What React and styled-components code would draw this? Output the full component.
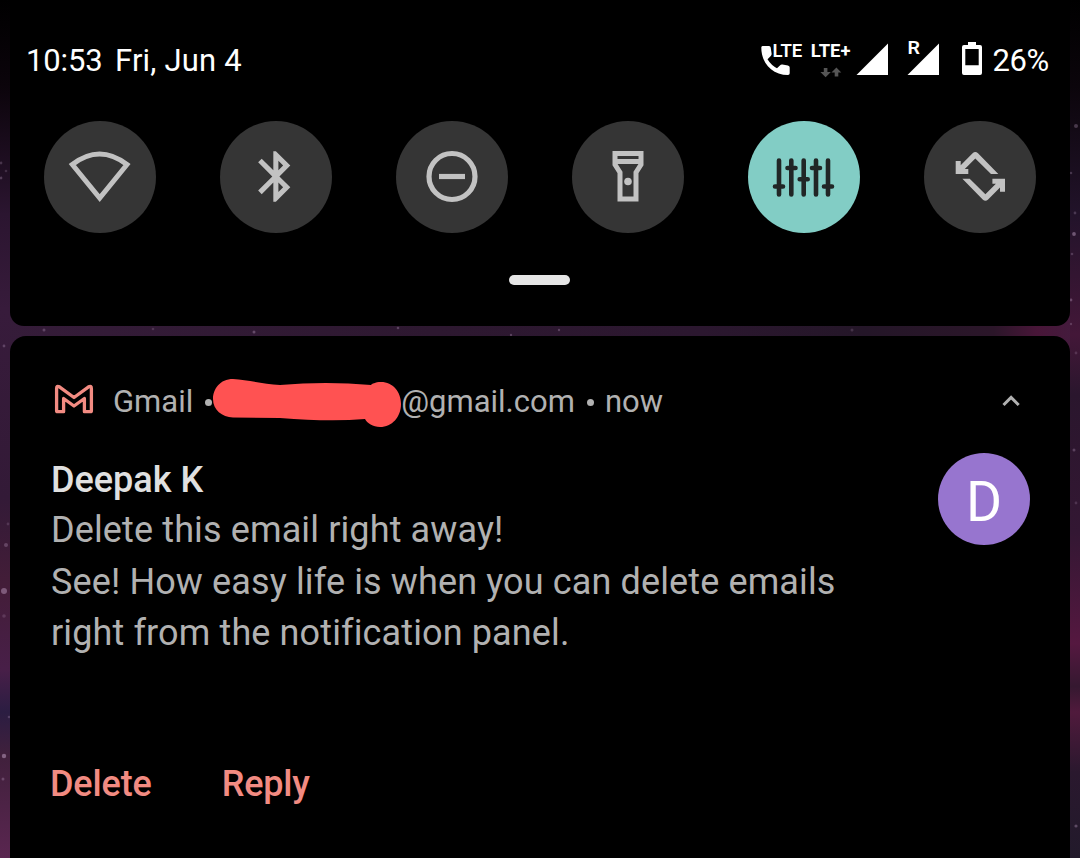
import React from 'react';
import styled, { createGlobalStyle } from 'styled-components';

const GlobalStyle = createGlobalStyle`
  * { box-sizing: border-box; }
  body { margin: 0; background: #000; font-family: Roboto, "Liberation Sans", sans-serif; }
`;

const Screen = styled.main`
  position: relative;
  width: 1080px;
  height: 858px;
  overflow: hidden;
  padding: 0 10px;
  display: flex;
  flex-direction: column;
  gap: 10px;
  background: linear-gradient(90deg, #351c39, #2d1830 40%, #2b172f 65%, #241628 80%, #2b1629 92%, #481638 96%, #431c3e);
`;

const Rail = styled.svg`
  position: absolute;
  left: 0;
  top: 0;
`;

const Shade = styled.section`
  position: relative;
  height: 326px;
  flex: none;
  display: flex;
  flex-direction: column;
  align-items: center;
  background: #000;
  border-radius: 0 0 14px 14px;
`;

const StatusBar = styled.header`
  width: 100%;
  height: 121px;
  padding: 41px 21px 0 16px;
  display: flex;
  justify-content: space-between;
  align-items: flex-start;
  color: #fff;
  font-size: 31px;
  line-height: 40px;
`;

const Clock = styled.div`
  display: flex;
  gap: 12.5px;
`;

const StatusText = styled.span`
  letter-spacing: ${(p) => p.$track}px;
`;

const Indicators = styled.div`
  display: flex;
  svg {
    margin-top: -8px;
    overflow: visible;
    font-family: Roboto, "Liberation Sans", sans-serif;
  }
`;

const Tiles = styled.div`
  width: 100%;
  padding: 0 34px;
  display: flex;
  justify-content: space-between;
`;

const Tile = styled.button`
  width: 112px;
  height: 112px;
  padding: 0;
  border: 0;
  border-radius: 50%;
  color: ${(p) => (p.$active ? '#212626' : '#c2c2c2')};
  background: ${(p) => (p.$active ? '#82cdc5' : '#353535')};
  svg { display: block; }
`;

const Handle = styled.div`
  width: 61px;
  height: 10px;
  margin: 42px 2px 0 0;
  border-radius: 5px;
  background: #e5e5e5;
`;

const Card = styled.article`
  position: relative;
  flex: 1;
  padding: 43px 40px 0 41px;
  background: #000;
  border-radius: 16px 16px 0 0;
`;

const CardHeader = styled.div`
  height: 46px;
  display: flex;
  align-items: center;
  color: #b1b1b1;
  font-size: 31px;
  line-height: 46px;
  white-space: pre;
`;

const Mark = styled.svg`
  flex: none;
  margin-right: 18px;
`;

const Label = styled.span`
  margin-right: ${(p) => p.$gap || 0}px;
`;

const Dot = styled.i`
  width: 7px;
  height: 7px;
  border-radius: 50%;
  background: #b1b1b1;
  margin-right: ${(p) => p.$gap || 0}px;
`;

const Scribble = styled.svg`
  flex: none;
`;

const Chevron = styled.svg`
  margin-left: auto;
`;

const Content = styled.div`
  display: flex;
  justify-content: space-between;
  padding-top: 28px;
`;

const Message = styled.div`
  color: #b1b1b1;
  font-size: 36px;
  line-height: 51.5px;
  white-space: nowrap;
`;

const Sender = styled.h1`
  margin: 0;
  height: 52px;
  color: #e0e0e0;
  font-size: 36px;
  line-height: 54px;
  font-weight: 500;
`;

const Line = styled.p`
  margin: 0;
  letter-spacing: 0.125px;
`;

const Avatar = styled.div`
  width: 92px;
  height: 92px;
  border-radius: 50%;
  background: #9775cf;
  color: #fff;
  display: flex;
  justify-content: center;
  font-size: 55px;
  line-height: 98px;
`;

const Actions = styled.div`
  display: flex;
  gap: 70px;
  margin: 98px 0 0 -1px;
`;

const Action = styled.button`
  padding: 0;
  border: 0;
  background: none;
  color: #f28b82;
  font: 500 36px/52px Roboto, "Liberation Sans", sans-serif;
  letter-spacing: -0.15px;
`;

const stars = [
  [44, 330, .3, 1.5], [153, 329, .2, 1.3], [254, 332, .35, 1.5], [398, 328, .3, 1.3], [511, 335, .3, 1.2],
  [559, 330, .3, 1.2], [852, 330, .2, 1.5], [4, 346, .3, 1.4], [1, 163, .25, 1.4], [6, 171, .2, 1.3],
  [1, 178, .3, 1.4], [8, 524, .2, 1.4], [6, 545, .3, 2], [4, 591, .45, 3], [4, 616, .2, 1.8],
  [9, 717, .25, 1.3], [4, 756, .5, 2.2], [3, 779, .3, 1.5],
  [1076, 126, .3, 2], [1071, 173, .25, 1.3], [1075, 213, .25, 1.4], [1074, 234, .45, 1.9],
  [1072, 254, .25, 1.3], [1071, 300, .35, 1.4], [1071, 324, .25, 1.2], [1076, 353, .2, 1.4],
  [1074, 450, .3, 1.5], [1076, 503, .2, 1.4], [1076, 826, .35, 1.6],
];

function Wallpaper() {
  return (
    <Rail width="1080" height="858" viewBox="0 0 1080 858">
      <defs>
        <linearGradient id="left" x1="0" y1="0" x2="0" y2="1">
          <stop offset="0" stopColor="#000" />
          <stop offset=".1" stopColor="#0b040b" />
          <stop offset=".25" stopColor="#2b1530" />
          <stop offset=".36" stopColor="#371b3b" />
          <stop offset=".58" stopColor="#331a37" />
          <stop offset=".68" stopColor="#431d38" />
          <stop offset=".78" stopColor="#481f48" />
          <stop offset=".83" stopColor="#2b1d42" />
          <stop offset=".88" stopColor="#40203c" />
          <stop offset="1" stopColor="#5a2650" />
        </linearGradient>
        <linearGradient id="right" x1="0" y1="0" x2="0" y2="1">
          <stop offset="0" stopColor="#000" />
          <stop offset=".1" stopColor="#0b050b" />
          <stop offset=".25" stopColor="#22132a" />
          <stop offset=".39" stopColor="#431738" />
          <stop offset=".46" stopColor="#2a162d" />
          <stop offset=".62" stopColor="#331733" />
          <stop offset=".75" stopColor="#551840" />
          <stop offset=".8" stopColor="#351830" />
          <stop offset=".83" stopColor="#501a3c" />
          <stop offset=".9" stopColor="#2a182e" />
          <stop offset="1" stopColor="#221a2b" />
        </linearGradient>
      </defs>
      <rect width="10" height="858" fill="url(#left)" />
      <rect x="1070" width="10" height="858" fill="url(#right)" />
      {stars.map(([x, y, o, r]) => (
        <circle key={`${x}-${y}`} cx={x} cy={y} r={r} fill="#c5a6ca" opacity={o} />
      ))}
    </Rail>
  );
}

function PhoneLte() {
  return (
    <svg width="53" height="48" viewBox="758 33 53 48" fill="#fff">
      <path d="M762.500 46h6.500q1.500 0 1.700 1.500l.9 6q.2 1.500-.8 2.500l-3.300 3.200q3.700 6 9.500 9l2.900-2.800q1-1 2.500-.8l5.500.9q1.800.3 1.800 2v5.800q0 1.700-1.700 1.700C772.500 75 761.300 63.500 761.300 47.500q0-1.500 1.200-1.500z" />
      <text x="772.500" y="56.500" fontSize="18" fontWeight="600" textLength="29.800" lengthAdjust="spacingAndGlyphs">LTE</text>
    </svg>
  );
}

function LtePlus() {
  return (
    <svg width="43" height="48" viewBox="811 33 43 48">
      <text x="810.800" y="56.700" fill="#fff" fontSize="19" fontWeight="700" textLength="39.700" lengthAdjust="spacingAndGlyphs">LTE+</text>
      <path fill="#555" d="M823.800 68h3.600v4h3.400l-5.200 5.300-5.200-5.300h3.400zM834.700 76.500h3.600v-4h3l-4.900-5-4.900 5h3.200z" />
    </svg>
  );
}

function Signal({ roaming }) {
  return (
    <svg width={roaming ? 67 : 40} height="48" viewBox={roaming ? '894 33 67 48' : '854 33 40 48'} fill="#fff">
      <path d={roaming ? 'M907.500 75L939 43.500V75z' : 'M856.500 75L888 43.500V75z'} />
      {roaming && <text x="907.500" y="54" fontSize="17.500" fontWeight="600" textLength="12.500" lengthAdjust="spacingAndGlyphs">R</text>}
    </svg>
  );
}

function Battery() {
  return (
    <svg width="31" height="48" viewBox="961 33 31 48">
      <path fill="#fff" fillRule="evenodd" d="M968 42h8v3h4q2 0 2 2v26q0 2-2 2h-16q-2 0-2-2V47q0-2 2-2h4zM965.300 49v16.300h13.400V49z" />
    </svg>
  );
}

const rotateArm = 'M48.600 32.300q2.700-2.500 5.400 0L74.300 53H67L51.300 37.600 40.800 48.100H44.300V53H31.700V40H36.700V44.200z';

const glyphs = {
  wifi: <path d="M28.300 43.500Q55.500 22.500 83 43.500L55.700 77z" fill="none" strokeWidth="5" />,
  bluetooth: <path transform="translate(25.500 25.100) scale(2.530)" fill="currentColor" stroke="none" d="M17.710 7.710L12 2h-1v7.590L6.410 5 5 6.410 10.590 12 5 17.590 6.410 19 11 14.410V22h1l5.710-5.710-4.300-4.290 4.300-4.290zM13 5.830l1.880 1.880L13 9.590V5.830zm1.880 10.460L13 18.170v-3.760l1.880 1.880z" />,
  dnd: <><circle cx="56" cy="55.500" r="23" fill="none" strokeWidth="5.200" /><path d="M43 55.500h26" strokeWidth="5.200" /></>,
  torch: <><path d="M43 32.500h26v11l-5 8V78H48V51.500l-5-8z" fill="none" strokeWidth="5" /><path d="M43 40.500h26" strokeWidth="5" /><circle cx="56" cy="60.500" r="3.800" fill="currentColor" stroke="none" /></>,
  sliders: <path d="M31 39.500v34M43.300 39.500v34M55.700 39.500v34M68 39.500v34M80 39.500v34M27 65.500h8M39.500 47h8M51.700 58.200h8M64 47h8M76 65.500h8" fill="none" strokeWidth="4.600" strokeLinecap="round" />,
  rotate: <g fill="currentColor" stroke="none"><path d={rotateArm} /><path d={rotateArm} transform="rotate(180 56.350 55.400)" /></g>,
};

function TileGlyph({ name }) {
  return <svg width="112" height="112" viewBox="0 0 112 112" stroke="currentColor">{glyphs[name]}</svg>;
}

export default function App() {
  return (
    <>
      <GlobalStyle />
      <Screen>
        <Wallpaper />
        <Shade>
          <StatusBar>
            <Clock>
              <StatusText $track={-0.15}>10:53</StatusText>
              <StatusText $track={0.2}>Fri, Jun 4</StatusText>
            </Clock>
            <Indicators>
              <PhoneLte />
              <LtePlus />
              <Signal />
              <Signal roaming />
              <Battery />
              <StatusText $track={-0.33}>26%</StatusText>
            </Indicators>
          </StatusBar>
          <Tiles>
            {Object.keys(glyphs).map((name) => (
              <Tile key={name} aria-label={name} $active={name === 'sliders'}><TileGlyph name={name} /></Tile>
            ))}
          </Tiles>
          <Handle />
        </Shade>
        <Card>
          <CardHeader>
            <Mark width="44" height="40" viewBox="51 382 44 40" fill="none" stroke="#f28b82" strokeWidth="3.300" strokeLinejoin="round">
              <path d="M56.600 388.500q0-3.200 2.800-1.700L74 397.500l14.600-10.700q2.800-1.500 2.800 1.700v22.200q0 1-1 1h-6v-13.200L74 406l-10.400-7.500v13.200h-6q-1 0-1-1z" />
            </Mark>
            <Label $gap={12}>Gmail</Label>
            <Dot />
            <Scribble width="189" height="50" viewBox="212 377 189 50">
              <path fill="#ff5252" d="M233 379C220 379 213 389 213 399c0 11 9 18 20 18.500l47 .5q50 4 85 1c2 4 8 8 15 8 12 0 21-10 21-23 0-12-8-22-20-22-6 0-9 2-10 3q-45-4-91 0c-17-1-32-5-47-6z" />
            </Scribble>
            <Label $gap={12}>@gmail.com</Label>
            <Dot $gap={11} />
            <Label>now</Label>
            <Chevron width="40" height="40" viewBox="990 382 40 40" fill="none" stroke="#b1b1b1" strokeWidth="3">
              <path d="M1003.500 405l7.600-7.600 7.600 7.600" />
            </Chevron>
          </CardHeader>
          <Content>
            <Message>
              <Sender>Deepak K</Sender>
              <Line>Delete this email right away!</Line>
              <Line>See! How easy life is when you can delete emails</Line>
              <Line>right from the notification panel.</Line>
            </Message>
            <Avatar>D</Avatar>
          </Content>
          <Actions><Action>Delete</Action><Action>Reply</Action></Actions>
        </Card>
      </Screen>
    </>
  );
}
